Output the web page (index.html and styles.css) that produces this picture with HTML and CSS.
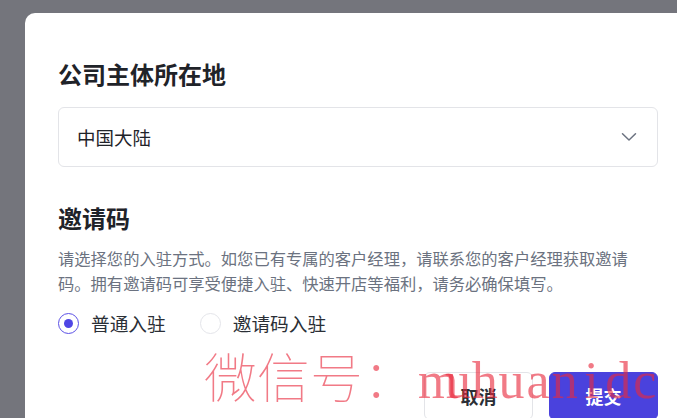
FILE: index.html
```html
<!DOCTYPE html>
<html lang="zh-CN">
<head>
<meta charset="utf-8">
<title>入驻信息</title>
<link rel="stylesheet" href="styles.css">
</head>
<body>
<div class="modal">
  <h2 class="section-title">公司主体所在地</h2>
  <div class="select">
    <span class="select-value">中国大陆</span>
    <svg class="chevron" width="16" height="10" viewBox="0 0 16 10"><polyline points="1.5,1.8 8,8 14.5,1.8" fill="none" stroke="#6b7280" stroke-width="1.5" stroke-linecap="round" stroke-linejoin="round"/></svg>
  </div>
  <h2 class="section-title second">邀请码</h2>
  <p class="desc">请选择您的入驻方式。如您已有专属的客户经理，请联系您的客户经理获取邀请码。拥有邀请码可享受便捷入驻、快速开店等福利，请务必确保填写。</p>
  <div class="radios">
    <label class="radio checked"><span class="circle"></span><span class="radio-label">普通入驻</span></label>
    <label class="radio"><span class="circle"></span><span class="radio-label">邀请码入驻</span></label>
  </div>
  <div class="actions">
    <button class="btn btn-cancel">取消</button>
    <button class="btn btn-submit">提交</button>
  </div>
</div>
<div class="watermark"><span class="wm-cjk">微信号：</span><span class="wm-latin"><span class="ch">m</span><span class="ch">u</span><span class="ch">h</span><span class="ch">u</span><span class="ch">a</span><span class="ch">n</span><span class="ch">i</span><span class="ch">d</span><span class="ch">c</span></span></div>
</body>
</html>
```
FILE: styles.css
```css
html, body {
  margin: 0;
  padding: 0;
}
body {
  width: 677px;
  height: 418px;
  overflow: hidden;
  background: #74757c;
  font-family: "Noto Sans CJK SC", "Noto Sans", sans-serif;
  position: relative;
}
.modal {
  margin: 13px 0 0 25px;
  width: 666px;
  height: 405px;
  box-sizing: border-box;
  background: #ffffff;
  border-radius: 10px 10px 0 0;
  padding: 45px 33px 0 33px;
}
.section-title {
  margin: 0;
  font-size: 24px;
  line-height: 32px;
  font-weight: 600;
  color: #1f2329;
}
.section-title.second {
  margin-top: 35px;
}
.select {
  margin-top: 17px;
  height: 60px;
  box-sizing: border-box;
  border: 1px solid #e3e4e8;
  border-radius: 6px;
  display: flex;
  align-items: center;
  justify-content: space-between;
  padding: 0 20px 0 18px;
}
.select-value {
  font-size: 18.5px;
  color: #1f2329;
}
.chevron {
  display: block;
}
.desc {
  margin: 12px 0 0 0;
  font-size: 16.3px;
  line-height: 25px;
  color: #6b7280;
}
.radios {
  margin-top: 15px;
  display: flex;
  align-items: center;
  gap: 34px;
  height: 24px;
}
.radio {
  display: flex;
  align-items: center;
  gap: 12px;
}
.circle {
  width: 21px;
  height: 21px;
  box-sizing: border-box;
  border-radius: 50%;
  border: 1.5px solid #e4e5ea;
  display: flex;
  align-items: center;
  justify-content: center;
}
.radio.checked .circle {
  border-color: #5b50e6;
}
.radio.checked .circle::after {
  content: "";
  width: 9px;
  height: 9px;
  border-radius: 50%;
  background: #4f46e5;
}
.radio-label {
  font-size: 18.7px;
  color: #2b2f36;
  line-height: 24px;
}
.actions {
  margin-top: 37px;
  display: flex;
  justify-content: flex-end;
  gap: 16px;
}
.btn {
  width: 109px;
  height: 48px;
  border-radius: 6px;
  font-family: "Noto Sans CJK SC", sans-serif;
  font-size: 18px;
  font-weight: 700;
  cursor: pointer;
  padding: 0;
}
.btn-cancel {
  background: #ffffff;
  border: 1px solid #e3e4e8;
  color: #2b2f36;
}
.btn-submit {
  background: #4a42dd;
  border: 1px solid #4a42dd;
  color: #ffffff;
}
.watermark {
  position: absolute;
  left: 204px;
  top: 343px;
  white-space: nowrap;
  color: rgba(232, 40, 60, 0.62);
  line-height: 64px;
  pointer-events: none;
}
.wm-cjk {
  font-family: "Noto Sans CJK SC", sans-serif;
  font-weight: 100;
  font-size: 53px;
}
.wm-latin {
  font-family: "Liberation Serif", serif;
  font-size: 52px;
  margin-left: 2px;
}
.ch {
  display: inline-block;
  width: 26.7px;
  text-align: center;
}
```
